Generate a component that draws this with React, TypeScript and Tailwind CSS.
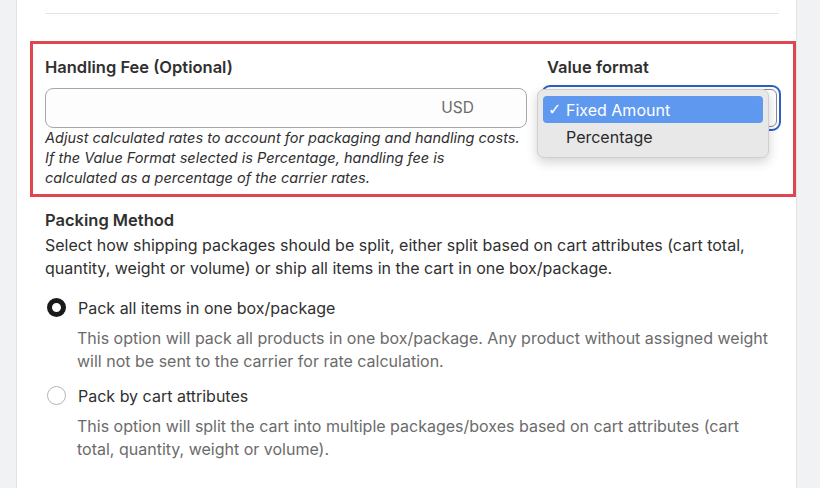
import React from 'react'

const font = { fontFamily: 'Inter, "Noto Sans", sans-serif' }

function Radio({ checked }: { checked: boolean }) {
  return checked ? (
    <span className="block w-[19px] h-[19px] rounded-full border-[5px] border-[#1a1a1a] bg-white shrink-0" />
  ) : (
    <span className="block w-[19px] h-[19px] rounded-full border border-[#b5b5b5] bg-white shrink-0" />
  )
}

interface OptionProps {
  checked: boolean
  label: string
  help: string
  className?: string
}
function PackOption({ checked, label, help, className }: OptionProps) {
  return (
    <div className={className}>
      <div className="flex items-center gap-[12px] h-[23px]">
        <span className="ml-[2px]">
          <Radio checked={checked} />
        </span>
        <span className="text-[16px] text-[#303030]">{label}</span>
      </div>
      <p className="mt-[8px] ml-[32px] w-[700px] text-[16px] leading-[23px] text-[#6b6b6b]">{help}</p>
    </div>
  )
}

export default function App() {
  return (
    <div
      className="w-[820px] h-[488px] overflow-hidden bg-[#f1f2f3] pl-[16px] pr-[23px]"
      style={font}
    >
      <div className="h-full bg-white border-x border-[#e3e3e3] pt-[13px]">
        <div className="ml-[28px] w-[734px] h-px bg-[#e3e4e6]" />

        <div className="mt-[27px] ml-[13px] w-[766px] border-[3px] border-[#e0464f] pl-[12px] pt-[13px] pb-[6px]">
          <div className="flex">
            <div className="w-[482px]">
              <div className="text-[16.5px] leading-[20px] font-semibold text-[#303030]">
                Handling Fee (Optional)
              </div>
              <div className="mt-[11px] h-[40px] rounded-[8px] border border-[#a8a8a8] bg-[#fdfdfd] flex items-center justify-end pr-[52px]">
                <span className="text-[15.5px] text-[#6b6b6b]">USD</span>
              </div>
              <p className="text-[14.5px] leading-[20px] italic text-[#303030] whitespace-nowrap">
                Adjust calculated rates to account for packaging and handling costs.
                <br />
                If the Value Format selected is Percentage, handling fee is
                <br />
                calculated as a percentage of the carrier rates.
              </p>
            </div>
            <div className="ml-[14px] w-[240px]">
              <div className="pl-[6px] text-[16.5px] leading-[20px] font-semibold text-[#303030]">
                Value format
              </div>
              <div className="relative mt-[8px]">
                <div className="h-[46px] rounded-[9px] border-2 border-[#2c5fc7] p-[2px]">
                  <div className="h-full rounded-[6px] border border-[#8a8a8a] bg-white" />
                </div>
                <div className="absolute left-[-4px] top-[4px] w-[232px] rounded-[7px] border border-[#cfcfcf] bg-[#e8e8e8] px-[5px] py-[6px] shadow-[0_4px_12px_rgba(0,0,0,0.18)]">
                  <div className="h-[27px] rounded-[4px] bg-[#5f98ef] flex items-center pl-[5px] text-white text-[16px]">
                    <span className="w-[18px] text-[16px] leading-none" style={{ fontFamily: '"DejaVu Sans", sans-serif' }}>✓</span>
                    <span>Fixed Amount</span>
                  </div>
                  <div className="h-[28px] flex items-center pl-[23px] text-[16px] text-[#2a2a2a]">
                    Percentage
                  </div>
                </div>
              </div>
            </div>
          </div>
        </div>

        <div className="ml-[28px] mt-[13px] w-[745px]">
          <div className="text-[16.5px] leading-[20px] font-semibold text-[#303030]">
            Packing Method
          </div>
          <p className="mt-[4px] text-[16px] leading-[23px] text-[#303030]">
            Select how shipping packages should be split, either split based on cart attributes (cart
            total, quantity, weight or volume) or ship all items in the cart in one box/package.
          </p>
          <div className="mt-[16px]">
            <PackOption
              checked
              label="Pack all items in one box/package"
              help="This option will pack all products in one box/package. Any product without assigned weight will not be sent to the carrier for rate calculation."
            />
            <PackOption
              className="mt-[11px]"
              checked={false}
              label="Pack by cart attributes"
              help="This option will split the cart into multiple packages/boxes based on cart attributes (cart total, quantity, weight or volume)."
            />
          </div>
        </div>
      </div>
    </div>
  )
}
